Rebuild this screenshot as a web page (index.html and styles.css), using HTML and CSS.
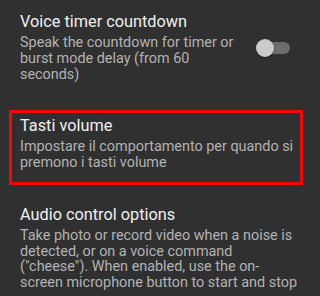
FILE: index.html
```html
<!DOCTYPE html>
<html>
<head>
<meta charset="utf-8">
<link rel="stylesheet" href="styles.css">
</head>
<body>
<div class="list">
  <div class="item item-first">
    <div class="text text-narrow">
      <div class="title">Voice timer countdown</div>
      <div class="summary">Speak the countdown for timer or burst mode delay (from 60 seconds)</div>
    </div>
    <div class="switch"><span class="track"></span><span class="thumb"></span></div>
  </div>
  <div class="item item-highlight">
    <div class="text">
      <div class="title">Tasti volume</div>
      <div class="summary">Impostare il comportamento per quando si premono i tasti volume</div>
    </div>
  </div>
  <div class="item item-last">
    <div class="text">
      <div class="title">Audio control options</div>
      <div class="summary">Take photo or record video when a noise is detected, or on a voice command ("cheese"). When enabled, use the on-screen microphone button to start and stop</div>
    </div>
  </div>
</div>
</body>
</html>
```
FILE: styles.css
```css
html, body {
  margin: 0;
  padding: 0;
  background: #303030;
  width: 320px;
  height: 296px;
  overflow: hidden;
  font-family: Roboto, "Liberation Sans", sans-serif;
}
.list {
  display: flex;
  flex-direction: column;
}
.item {
  display: flex;
  align-items: center;
}
.text {
  flex: 1;
  min-width: 0;
}
.title {
  color: #f0f0f0;
  font-size: 16.3px;
  line-height: 20px;
  margin-bottom: 3px;
}
.summary {
  color: #b3b3b3;
  font-size: 14.4px;
  line-height: 16px;
}
.item-first {
  padding: 12px 30px 27px 20px;
}
.text-narrow {
  padding-right: 16px;
}
.item-highlight {
  margin: 0 17px 0 9px;
  border: 3px solid #ee0a0a;
  padding: 3px 1px 11px 8px;
}
.item-last {
  padding: 20px 23px 0 20px;
}
.item-last .summary {
  line-height: 15.7px;
}
.switch {
  position: relative;
  width: 34px;
  height: 18px;
  flex: none;
}
.track {
  position: absolute;
  left: 2px;
  top: 3px;
  width: 32px;
  height: 12px;
  border-radius: 6px;
  background: #6c6c6c;
}
.thumb {
  position: absolute;
  left: 0;
  top: 0;
  width: 18px;
  height: 18px;
  border-radius: 50%;
  background: #cbcbcb;
  box-shadow: 0 1px 2px rgba(0,0,0,0.35);
}
```
